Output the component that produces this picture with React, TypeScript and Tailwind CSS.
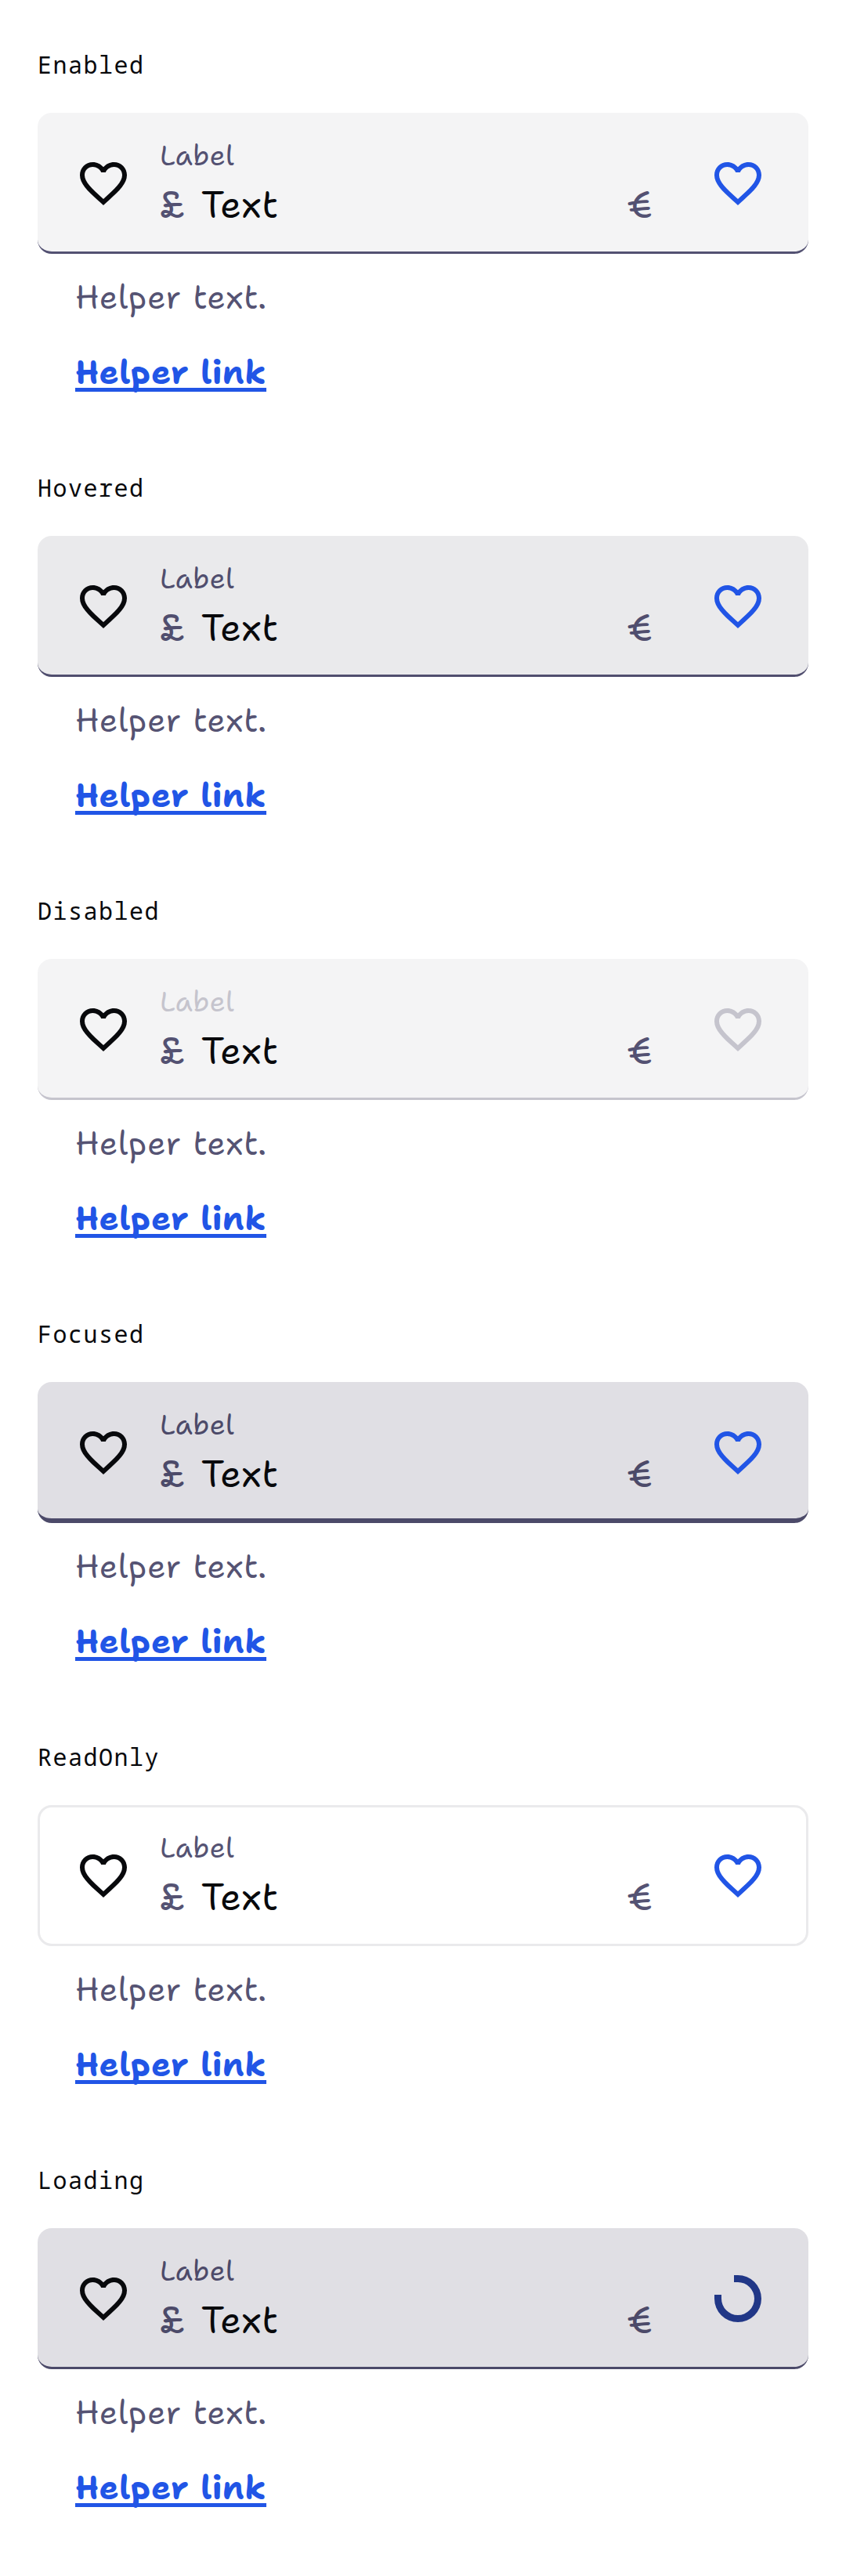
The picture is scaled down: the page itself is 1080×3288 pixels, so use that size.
type FieldState = {
  name: string;
  surface: string;
  label: string;
  dim: string;
  trailing: string;
  loading?: boolean;
};

const states: FieldState[] = [
  { name: "Enabled", surface: "bg-[#f4f4f5] border-b-[3px] border-[#535172]", label: "text-[#535172]", dim: "text-[#535172]", trailing: "text-[#2155e6]" },
  { name: "Hovered", surface: "bg-[#eaeaec] border-b-[3px] border-[#504e6e]", label: "text-[#504e6e]", dim: "text-[#504e6e]", trailing: "text-[#2155e6]" },
  { name: "Disabled", surface: "bg-[#f4f4f5] border-b-[3px] border-[#c5c4cd]", label: "text-[#c5c4cd]", dim: "text-[#535172]", trailing: "text-[#c5c4cd]" },
  { name: "Focused", surface: "bg-[#e0dfe4] border-b-[6px] border-[#4c4a69]", label: "text-[#4c4a69]", dim: "text-[#4c4a69]", trailing: "text-[#2155e6]" },
  { name: "ReadOnly", surface: "bg-white shadow-[inset_0_0_0_3px_#eaeaec]", label: "text-[#555373]", dim: "text-[#555373]", trailing: "text-[#2155e6]" },
  { name: "Loading", surface: "bg-[#e0dfe4] border-b-[3px] border-[#4c4a69]", label: "text-[#4c4a69]", dim: "text-[#4c4a69]", trailing: "text-[#213787]", loading: true },
];

function Heart() {
  return (
    <svg viewBox="0 0 24 24" className="size-[72px]" fill="currentColor">
      <path d="M16.5 3c-1.74 0-3.41.81-4.5 2.09C10.91 3.81 9.24 3 7.5 3 4.42 3 2 5.42 2 8.5c0 3.78 3.4 6.86 8.55 11.54L12 21.35l1.45-1.32C18.6 15.36 22 12.28 22 8.5 22 5.42 19.58 3 16.5 3zm-4.4 15.55-.1.1-.1-.1C7.14 14.24 4 11.39 4 8.5 4 6.5 5.5 5 7.5 5c1.54 0 3.04.99 3.57 2.36h1.87C13.46 5.99 14.96 5 16.5 5c2 0 3.5 1.5 3.5 3.5 0 2.89-3.14 5.74-7.9 10.05z" />
    </svg>
  );
}

function Spinner() {
  return (
    <svg viewBox="-36 -36 72 72" className="size-[72px]" fill="currentColor">
      <path d="M-5-30H0A30 30 0 1 1-30 0V-5H-21V0A21 21 0 1 0 0-21H-5Z" />
    </svg>
  );
}

function Field({ state }: { state: FieldState }) {
  return (
    <section className="h-[540px] px-12 pt-[59px] text-[#08090c]">
      <h2 className="h-12 font-['Noto_Sans_Mono','DejaVu_Sans_Mono',monospace] text-[30px] leading-[48px] font-normal tracking-[1.5px]">{state.name}</h2>
      <div className={`mt-[37px] flex h-[180px] items-start rounded-[18px] pr-[54px] pl-12 ${state.surface}`}>
        <div className="mt-[54px]"><Heart /></div>
        <div className="ml-9 flex-1 pt-[31px]">
          <div className={`text-[36px] leading-[48px] tracking-[0.25px] ${state.label}`}>Label</div>
          <div className="mt-[2px] flex text-[48px] leading-[72px]">
            <span className={`w-[53px] ${state.dim}`}>£</span>
            <span className="flex-1 tracking-[0.3px]">Text</span>
            <span className={`mr-[73px] ${state.dim}`}>€</span>
          </div>
        </div>
        <div className={`mt-[54px] ${state.trailing}`}>{state.loading ? <Spinner /> : <Heart />}</div>
      </div>
      <div className="px-12">
        <p className="mt-[25px] text-[42px] leading-[60px] tracking-[0.5px] text-[#555373]">Helper text.</p>
        <p className="mt-9 text-[42px] leading-[60px]">
          <a className="font-bold tracking-[0.5px] text-[#2155e6] underline decoration-[5px] underline-offset-[5px] [text-decoration-skip-ink:none]">Helper link</a>
        </p>
      </div>
    </section>
  );
}

export default function App() {
  return (
    <main className="min-h-[3288px] bg-white font-['Shantell_Sans','Playpen_Sans','Lato',sans-serif]">
      {states.map((s) => <Field key={s.name} state={s} />)}
    </main>
  );
}
